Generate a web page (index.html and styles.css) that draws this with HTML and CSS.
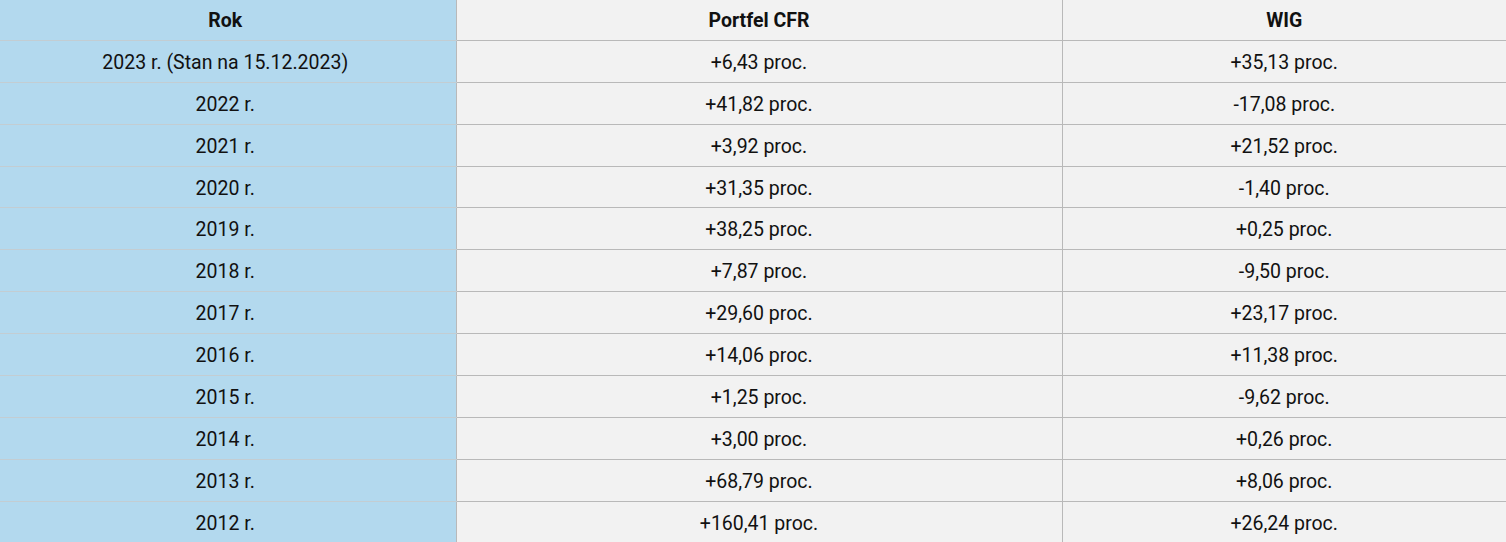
FILE: index.html
```html
<!DOCTYPE html>
<html lang="pl">
<head>
<meta charset="utf-8">
<link rel="stylesheet" href="styles.css">
</head>
<body>
<table class="tbl">
  <colgroup><col class="c1"><col class="c2"><col class="c3"></colgroup>
  <thead>
    <tr><th class="year">Rok</th><th>Portfel CFR</th><th>WIG</th></tr>
  </thead>
  <tbody>
    <tr><td class="year">2023 r. (Stan na 15.12.2023)</td><td>+6,43 proc.</td><td>+35,13 proc.</td></tr>
    <tr><td class="year">2022 r.</td><td>+41,82 proc.</td><td>-17,08 proc.</td></tr>
    <tr><td class="year">2021 r.</td><td>+3,92 proc.</td><td>+21,52 proc.</td></tr>
    <tr><td class="year">2020 r.</td><td>+31,35 proc.</td><td>-1,40 proc.</td></tr>
    <tr><td class="year">2019 r.</td><td>+38,25 proc.</td><td>+0,25 proc.</td></tr>
    <tr><td class="year">2018 r.</td><td>+7,87 proc.</td><td>-9,50 proc.</td></tr>
    <tr><td class="year">2017 r.</td><td>+29,60 proc.</td><td>+23,17 proc.</td></tr>
    <tr><td class="year">2016 r.</td><td>+14,06 proc.</td><td>+11,38 proc.</td></tr>
    <tr><td class="year">2015 r.</td><td>+1,25 proc.</td><td>-9,62 proc.</td></tr>
    <tr><td class="year">2014 r.</td><td>+3,00 proc.</td><td>+0,26 proc.</td></tr>
    <tr><td class="year">2013 r.</td><td>+68,79 proc.</td><td>+8,06 proc.</td></tr>
    <tr><td class="year">2012 r.</td><td>+160,41 proc.</td><td>+26,24 proc.</td></tr>
  </tbody>
</table>
</body>
</html>
```

FILE: styles.css
```css
html, body {
  margin: 0;
  padding: 0;
  background: #f2f2f2;
  overflow: hidden;
}
.tbl {
  width: 1506px;
  border-collapse: collapse;
  table-layout: fixed;
  margin-top: -2px;
  font-family: Roboto, "Liberation Sans", sans-serif;
  font-size: 19.5px;
  color: #111;
}
.c1 { width: 456px; }
.c2 { width: 606px; }
.c3 { width: 444px; }
.tbl th,
.tbl td {
  height: 41.9px;
  padding: 2px 8px 0;
  text-align: center;
  vertical-align: middle;
  border: 1px solid #b9b9b9;
  background: #f2f2f2;
  line-height: 23px;
  box-sizing: border-box;
}
.tbl th { font-weight: 700; }
.tbl th:first-child,
.tbl td:first-child { border-left: none; }
.tbl th:last-child,
.tbl td:last-child { border-right: none; }
.tbl .year {
  padding-left: 8px;
  padding-right: 13px;
  background: #b3d9ee;
  border-top-color: #c3cdd2;
  border-bottom-color: #c3cdd2;
}
```
